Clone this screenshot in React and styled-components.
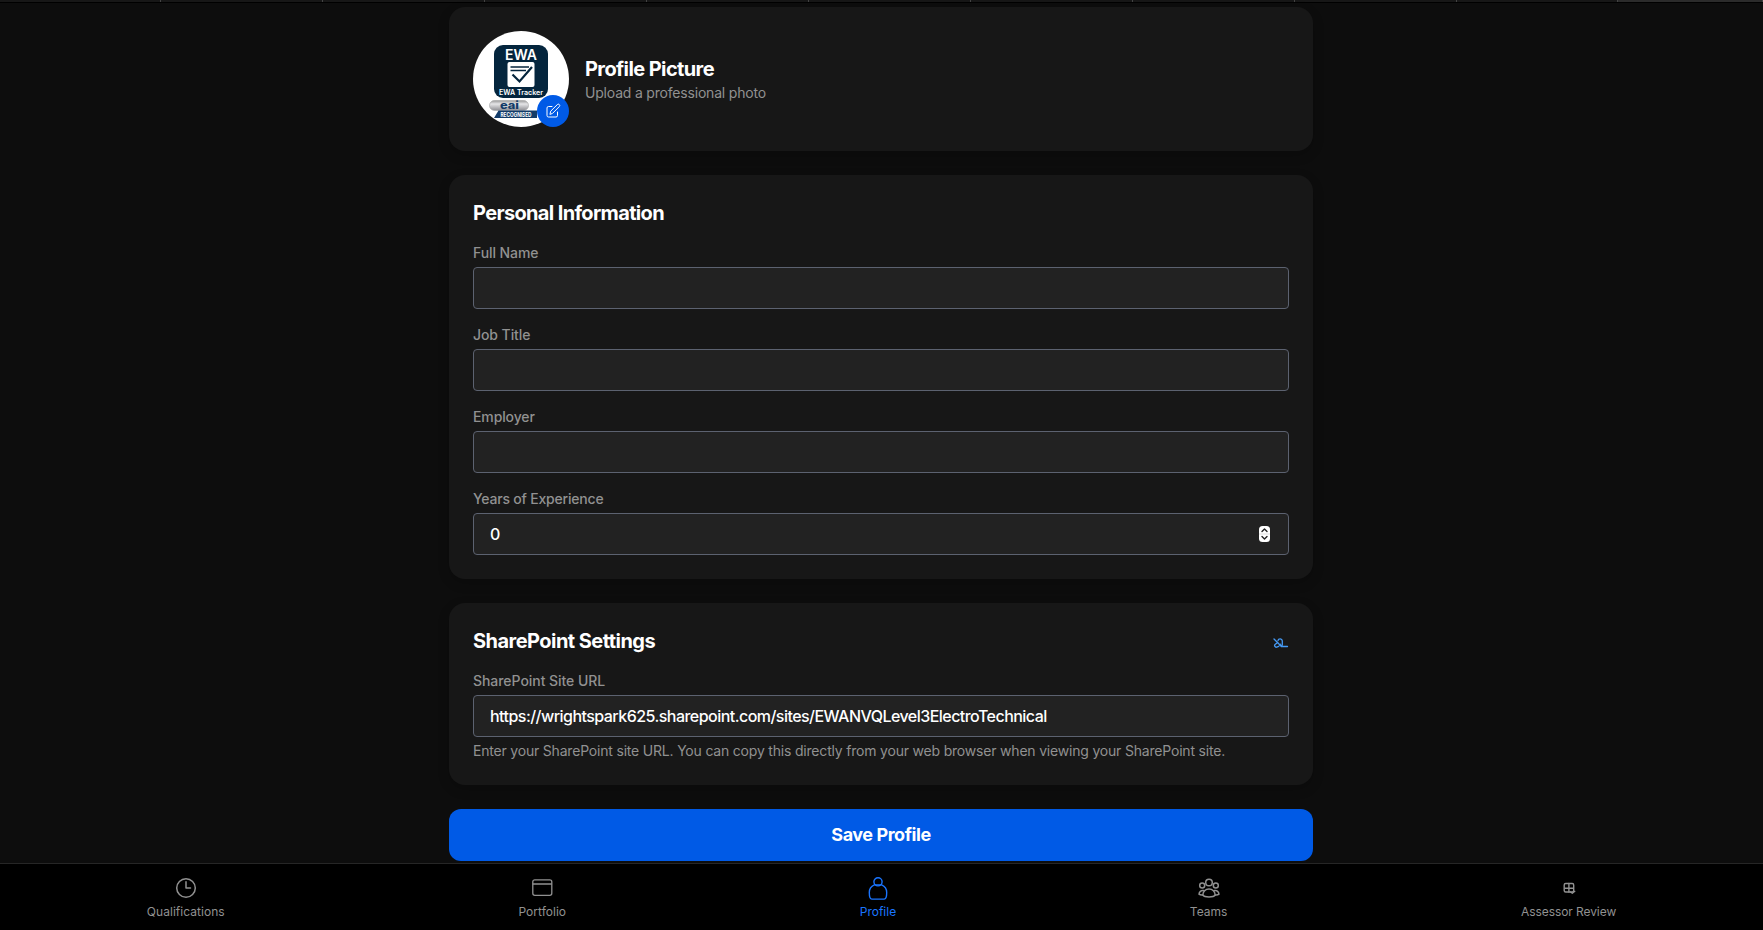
import React from "react";
import styled, { createGlobalStyle } from "styled-components";

const Global = createGlobalStyle`
  * { box-sizing: border-box; }
  html, body { margin: 0; background: #0d0d0d; }
  body { font-family: Inter, "Liberation Sans", sans-serif; color: #fff; overflow: hidden; }
  h2, p { margin: 0; }
`;

const Screen = styled.div`
  height: 930px;
  display: flex;
  flex-direction: column;
  background: #0d0d0d;
`;

const TabStrip = styled.div`
  display: flex;
  height: 3px;
  flex: none;
  border-bottom: 1px solid #000;
  background: #171717;
`;
const BrowserTab = styled.div`
  width: ${(p) => p.$width}px;
  flex: none;
  border-right: 1px solid #444;
  background: ${(p) => (p.$active ? "#2b2b2b" : "#171717")};
`;

const Main = styled.main`
  width: 864px;
  margin-left: 449px;
  padding-top: 4px;
  flex: 1;
  min-height: 0;
  display: flex;
  flex-direction: column;
  gap: 24px;
`;

const Card = styled.section`
  padding: 24px;
  border-radius: 16px;
  background: #171717;
  box-shadow: 0 4px 12px rgba(0, 0, 0, 0.2);
`;
const ProfileRow = styled.div`
  display: flex;
  align-items: center;
  gap: 16px;
`;
const AvatarWrap = styled.div`
  position: relative;
  width: 96px;
  height: 96px;
`;
const AvatarArt = styled.svg`
  display: block;
  width: 96px;
  height: 96px;
  border-radius: 50%;
  background: #fff;
`;
const EditBadge = styled.button`
  position: absolute;
  right: 0;
  bottom: 0;
  width: 32px;
  height: 32px;
  padding: 0;
  border: 0;
  border-radius: 50%;
  display: grid;
  place-items: center;
  background: #005ae6;
  color: #fff;
`;

const Title = styled.h2`
  font-size: 20px;
  line-height: 28px;
  font-weight: 700;
  letter-spacing: ${(p) => p.$track || "-0.65px"};
  white-space: nowrap;
`;
const Muted = styled.p`
  font-size: 14px;
  line-height: 20px;
  color: #919191;
  letter-spacing: -0.195px;
  margin-top: ${(p) => p.$top || 0}px;
  white-space: nowrap;
`;
const CardHeader = styled.div`
  display: flex;
  justify-content: space-between;
  align-items: center;
  margin-bottom: 16px;
`;
const Fields = styled.div`
  display: flex;
  flex-direction: column;
  gap: 16px;
`;
const Field = styled.label`
  display: block;
`;
const LabelText = styled.span`
  display: block;
  margin-bottom: 4px;
  font-size: 14px;
  line-height: 20px;
  font-weight: 500;
  color: #919191;
  letter-spacing: ${(p) => p.$track || "-0.08px"};
`;
const Box = styled.div`
  height: 42px;
  padding: 0 18px 0 16px;
  border: 1px solid #5c6270;
  border-radius: 4px;
  background: #222;
  display: flex;
  align-items: center;
  justify-content: space-between;
`;
const Value = styled.span`
  font-size: 16px;
  line-height: 24px;
  font-weight: 500;
  letter-spacing: ${(p) => p.$track || "0"};
  white-space: nowrap;
`;
const Save = styled.button`
  height: 52px;
  flex: none;
  border: 0;
  border-radius: 12px;
  background: #005ae6;
  color: #fff;
  font: 700 18px/28px Inter, sans-serif;
  letter-spacing: -0.45px;
`;

const Nav = styled.nav`
  height: 67px;
  flex: none;
  display: flex;
  justify-content: space-around;
  border-top: 1px solid #262626;
  background: #000;
`;
const NavItem = styled.a`
  padding-top: 12px;
  display: flex;
  flex-direction: column;
  align-items: center;
  gap: 4px;
  color: ${(p) => (p.$active ? "#1a75ff" : "#919191")};
`;
const NavLabel = styled.span`
  font-size: 12px;
  line-height: 16px;
  letter-spacing: ${(p) => p.$track || "0"};
  white-space: nowrap;
`;
const Icon = styled.svg.attrs({ fill: "none", stroke: "currentColor", strokeLinecap: "round", strokeLinejoin: "round" })`
  display: block;
  flex: none;
`;

const LinkSlot = styled.span`
  padding-top: 4px;
`;

const Avatar = () => (
  <AvatarArt viewBox="0 0 96 96" fontFamily="Inter, sans-serif">
    <defs>
      <linearGradient id="pill" x1="0" y1="0" x2="0" y2="1">
        <stop offset="0" stopColor="#999" />
        <stop offset=".35" stopColor="#e6e6e8" />
        <stop offset="1" stopColor="#8e8e93" />
      </linearGradient>
    </defs>
    <rect x="21" y="14" width="54" height="53" rx="9" fill="#04253d" />
    <text x="32" y="29" fontSize="14" fontWeight="600" fill="#fff" textLength="32" lengthAdjust="spacingAndGlyphs">EWA</text>
    <rect x="34.500" y="31" width="27" height="25" rx="2" fill="#fff" />
    <g fill="none" stroke="#04253d">
      <path d="M37.500 36H56M37.500 39.500H53" strokeWidth="1.500" />
      <path d="M39.500 43.500L46.500 50.500L59 36" strokeWidth="2.200" />
    </g>
    <text x="26" y="64.300" fontSize="7.300" fontWeight="600" fill="#fff" textLength="44" lengthAdjust="spacingAndGlyphs">EWA Tracker</text>
    <rect x="16.500" y="69.500" width="39" height="10" rx="5" fill="url(#pill)" stroke="#aaa" strokeWidth=".7" />
    <text x="27" y="77.800" fontSize="10.500" fontWeight="800" fill="#123b68" textLength="19" lengthAdjust="spacingAndGlyphs">eai</text>
    <path d="M25.500 79.500H64V87H21Z" fill="#123b68" />
    <text x="27.500" y="85.600" fontSize="6.400" fontWeight="700" fill="#fff" textLength="31" lengthAdjust="spacingAndGlyphs">RECOGNISED</text>
  </AvatarArt>
);

const NumberStepper = () => (
  <Icon width="11" height="16" viewBox="0 0 11 16">
    <rect width="11" height="16" rx="3.500" fill="#fff" stroke="none" />
    <path d="M0 8H11" stroke="#ddd" />
    <path d="M3 5.500L5.500 3L8 5.500M3 10.500L5.500 13L8 10.500" stroke="#222" strokeWidth="1.400" />
  </Icon>
);

const SharePointGlyph = () => (
  <LinkSlot>
    <Icon width="16" height="10" viewBox="0 0 16 10" strokeWidth="1.300" color="#459af5">
      <path d="M1 1L8.500 8.500M4.800 4.500L2.300 6.300A1.600 1.600 0 0 0 4 9C5.500 9 6.500 7.500 7.500 6.200M5 2.500A2.200 2.200 0 0 1 9.300 2.800V5.500A3 3 0 0 1 8 8.500H14.500" />
    </Icon>
  </LinkSlot>
);

const icons = {
  clock: (
    <Icon width="24" height="24" viewBox="0 0 24 24" strokeWidth="1.500">
      <circle cx="12" cy="12" r="9.300" />
      <path d="M12 5.800V12H16.500" />
    </Icon>
  ),
  window: (
    <Icon width="24" height="24" viewBox="0 0 24 24" strokeWidth="1.300">
      <rect x="2.800" y="3.800" width="19" height="15.500" rx="2" />
      <path d="M3 8H21.500" />
    </Icon>
  ),
  person: (
    <Icon width="24" height="24" viewBox="0 0 24 24" strokeWidth="1.400">
      <circle cx="12" cy="5.800" r="4.100" />
      <path d="M8.300 8.900C5 10.300 3.300 13 3.300 16.500C3.300 19 3.800 23.100 5.800 23.100H18.200C20.200 23.100 20.700 19 20.700 16.500C20.700 13 19 10.300 15.700 8.900Z" />
    </Icon>
  ),
  team: (
    <Icon width="24" height="24" viewBox="0 0 24 24" strokeWidth="1.500">
      <circle cx="12" cy="6.500" r="3.300" />
      <circle cx="5.200" cy="9.500" r="2.500" />
      <circle cx="18.800" cy="9.500" r="2.500" />
      <path d="M5.800 19C5.800 15.500 8.500 13 12 13S18.200 15.500 18.200 19C16.500 21.500 7.500 21.500 5.800 19Z" />
      <path d="M6.500 14.600C4 14.200 2.200 15.700 2 18.200C3 19 4.500 19.100 5.800 19M17.500 14.600C20 14.200 21.800 15.700 22 18.200C21 19 19.500 19.100 18.200 19" />
    </Icon>
  ),
  review: (
    <Icon width="24" height="24" viewBox="0 0 24 24" strokeWidth="1.400">
      <rect x="7.200" y="7.500" width="9.500" height="8.500" rx="1.500" />
      <path d="M11.900 7.500V16M8 12.300H16M13.500 16L15.300 17.200L17.800 15.300" />
    </Icon>
  ),
};

const navItems = [
  { icon: "clock", label: "Qualifications", track: "0.04px" },
  { icon: "window", label: "Portfolio", track: "0.02px" },
  { icon: "person", label: "Profile", active: true },
  { icon: "team", label: "Teams" },
  { icon: "review", label: "Assessor Review", track: "-0.08px" },
];

const TextField = ({ label, value, track, valueTrack, children }) => (
  <Field>
    <LabelText $track={track}>{label}</LabelText>
    <Box>
      <Value $track={valueTrack}>{value}</Value>
      {children}
    </Box>
  </Field>
);

export default function App() {
  return (
    <Screen>
      <Global />
      <TabStrip>
        {[161, 162, 162, 162, 162, 162, 162, 162, 162, 161].map((w, i) => (
          <BrowserTab key={i} $width={w} />
        ))}
        <BrowserTab $width={145} $active />
      </TabStrip>
      <Main>
        <Card>
          <ProfileRow>
            <AvatarWrap>
              <Avatar />
              <EditBadge aria-label="Edit picture">
                <Icon width="16" height="16" viewBox="0 0 16 16" strokeWidth="1">
                  <path d="M7 3.500H3.500A1.500 1.500 0 0 0 2 5V12.500A1.500 1.500 0 0 0 3.500 14H11A1.500 1.500 0 0 0 12.500 12.500V9" />
                  <path d="M5 11L5.700 8.200L12.300 1.600A1.300 1.300 0 0 1 14.300 3.600L7.700 10.200Z" />
                </Icon>
              </EditBadge>
            </AvatarWrap>
            <div>
              <Title $track="-0.6px">Profile Picture</Title>
              <Muted>Upload a professional photo</Muted>
            </div>
          </ProfileRow>
        </Card>
        <Card>
          <CardHeader>
            <Title>Personal Information</Title>
          </CardHeader>
          <Fields>
            <TextField label="Full Name" />
            <TextField label="Job Title" />
            <TextField label="Employer" track="-0.12px" />
            <TextField label="Years of Experience" value="0" track="-0.2px">
              <NumberStepper />
            </TextField>
          </Fields>
        </Card>
        <Card>
          <CardHeader>
            <Title $track="-0.54px">SharePoint Settings</Title>
            <SharePointGlyph />
          </CardHeader>
          <TextField
            label="SharePoint Site URL"
            value="https://wrightspark625.sharepoint.com/sites/EWANVQLevel3ElectroTechnical"
            track="-0.05px"
            valueTrack="-0.54px"
          />
          <Muted $top={4}>
            Enter your SharePoint site URL. You can copy this directly from your web browser when viewing your SharePoint site.
          </Muted>
        </Card>
        <Save>Save Profile</Save>
      </Main>
      <Nav>
        {navItems.map((n) => (
          <NavItem key={n.label} $active={n.active}>
            {icons[n.icon]}
            <NavLabel $track={n.track}>{n.label}</NavLabel>
          </NavItem>
        ))}
      </Nav>
    </Screen>
  );
}
